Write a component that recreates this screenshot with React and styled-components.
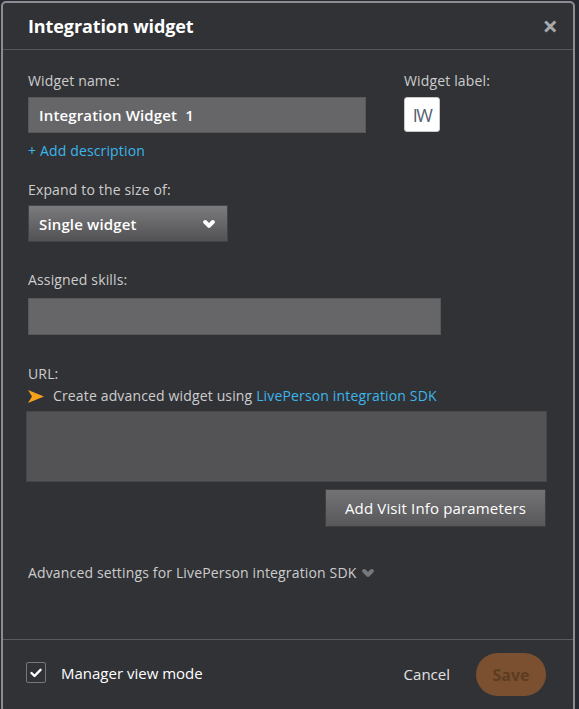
import React from 'react';
import styled, { createGlobalStyle } from 'styled-components';

const GlobalStyle = createGlobalStyle`
  html, body {
    margin: 0;
    padding: 0;
    background: #262832;
    font-family: "Open Sans", "Liberation Sans", sans-serif;
    overflow: hidden;
  }
`;

const Dialog = styled.div`
  margin: 1px 0 0 1px;
  width: 570px;
  height: 708px;
  border: 2px solid #8c8d91;
  border-radius: 5px;
  background: #313236;
  display: flex;
  flex-direction: column;
  color: #cfcfcf;
`;

const Header = styled.div`
  height: 46px;
  border-bottom: 1px solid #55565a;
  display: flex;
  align-items: center;
  justify-content: space-between;
  padding: 0 15px 0 25px;
`;

const Title = styled.h1`
  margin: 0;
  font-size: 18px;
  font-weight: 700;
  color: #fff;
  letter-spacing: -0.1px;
`;

const Close = styled.span`
  font-size: 27px;
  font-weight: 700;
  color: #a9a9ab;
  line-height: 1;
  margin-top: -2px;
`;

const Body = styled.div`
  height: 590px;
  box-sizing: border-box;
  padding: 22px 27px 0 25px;
  display: flex;
  flex-direction: column;
  border-bottom: 1px solid #5a5b5f;
  letter-spacing: 0.15px;
`;

const Row = styled.div`
  display: flex;
  gap: 38px;
`;

const Field = styled.div`
  display: flex;
  flex-direction: column;
  margin-top: ${({ $top }) => $top || 0}px;
`;

const Label = styled.div`
  font-size: 14px;
  line-height: 18px;
  color: #cdcdcd;
`;

const TextInput = styled.div`
  box-sizing: border-box;
  width: ${({ $w }) => $w}px;
  height: ${({ $h }) => $h || 36}px;
  margin-top: ${({ $gap }) => $gap || 7}px;
  background: #666668;
  border: 1px solid #58585a;
  display: flex;
  align-items: center;
  padding-left: 10px;
  font-size: 15px;
  font-weight: 600;
  color: #fff;
  white-space: pre;
`;

const LabelBox = styled.div`
  box-sizing: border-box;
  width: 36px;
  height: 35px;
  margin-top: 7px;
  background: #fff;
  border: 1px solid #c8c8c8;
  border-radius: 3px;
  display: flex;
  align-items: center;
  justify-content: center;
  font-size: 18px;
  color: #56606c;
  letter-spacing: -1.5px;
`;

const Link = styled.span`
  color: #3cb6ea;
`;

const AddDesc = styled.div`
  margin-top: 8px;
  font-size: 14px;
  line-height: 20px;
  color: #3cb6ea;
`;

const Select = styled.div`
  box-sizing: border-box;
  width: 200px;
  height: 37px;
  margin-top: 6px;
  background: linear-gradient(to bottom, #7b7b7d, #525254);
  border: 1px solid #444447;
  display: flex;
  align-items: center;
  justify-content: space-between;
  padding: 0 12px 0 10px;
  font-size: 15px;
  font-weight: 600;
  color: #fff;
`;

const Hint = styled.div`
  margin-top: 3px;
  display: flex;
  align-items: center;
  gap: 9px;
  font-size: 14px;
  line-height: 20px;
  color: #cdcdcd;
`;

const TextArea = styled.div`
  box-sizing: border-box;
  width: 521px;
  height: 71px;
  margin: 5px 0 0 -2px;
  background: #535355;
  border: 1px solid #47474a;
`;

const ButtonRow = styled.div`
  display: flex;
  justify-content: flex-end;
  margin-top: 7px;
`;

const GrayButton = styled.div`
  box-sizing: border-box;
  width: 221px;
  height: 38px;
  background: linear-gradient(to bottom, #737375, #58585a);
  border: 1px solid #3f3f42;
  display: flex;
  align-items: center;
  justify-content: center;
  font-size: 15px;
  color: #fff;
`;

const Advanced = styled.div`
  margin-top: 36px;
  display: flex;
  align-items: center;
  gap: 6px;
  font-size: 14px;
  line-height: 20px;
  color: #cdcdcd;
`;

const Footer = styled.div`
  flex: 1;
  display: flex;
  align-items: flex-start;
  padding: 13px 27px 0 23px;
`;

const Check = styled.label`
  display: flex;
  align-items: center;
  gap: 15px;
  margin-top: 9px;
  font-size: 15px;
  color: #fff;
`;

const Box = styled.span`
  box-sizing: border-box;
  width: 20px;
  height: 21px;
  border: 1px solid #76777b;
  border-radius: 2px;
  display: flex;
  align-items: center;
  justify-content: center;
`;

const Actions = styled.div`
  margin-left: auto;
  display: flex;
  align-items: center;
  gap: 26px;
`;

const Cancel = styled.span`
  font-size: 15px;
  color: #e2e2e2;
  margin-top: -2px;
`;

const Save = styled.div`
  width: 70px;
  height: 43px;
  border-radius: 22px;
  background: #7a5030;
  display: flex;
  align-items: center;
  justify-content: center;
  font-size: 16px;
  font-weight: 700;
  color: #5d3c22;
`;

function Chevron({ color }) {
  return (
    <svg width="12" height="10" viewBox="0 0 12 10">
      <path d="M2.2 3 L6 6.8 L9.8 3" fill="none" stroke={color} strokeWidth="4" strokeLinecap="round" strokeLinejoin="round" />
    </svg>
  );
}

function Arrow() {
  return (
    <svg width="16" height="13" viewBox="0 0 16 13">
      <polygon points="0,0 16,6.5 0,13 4,6.5" fill="#f5a11c" />
    </svg>
  );
}

export default function App() {
  return (
    <>
      <GlobalStyle />
      <Dialog>
        <Header>
          <Title>Integration widget</Title>
          <Close>×</Close>
        </Header>
        <Body>
          <Row>
            <Field>
              <Label>Widget name:</Label>
              <TextInput $w={338}>Integration Widget  1</TextInput>
            </Field>
            <Field>
              <Label>Widget label:</Label>
              <LabelBox>IW</LabelBox>
            </Field>
          </Row>
          <AddDesc>+ Add description</AddDesc>

          <Field $top={20}>
            <Label>Expand to the size of:</Label>
            <Select>
              Single widget
              <Chevron color="#fff" />
            </Select>
          </Field>

          <Field $top={29}>
            <Label>Assigned skills:</Label>
            <TextInput $w={413} $h={37} $gap={9} />
          </Field>

          <Field $top={30}>
            <Label>URL:</Label>
            <Hint>
              <Arrow />
              <span>
                Create advanced widget using <Link>LivePerson integration SDK</Link>
              </span>
            </Hint>
            <TextArea />
          </Field>
          <ButtonRow>
            <GrayButton>Add Visit Info parameters</GrayButton>
          </ButtonRow>

          <Advanced>
            Advanced settings for LivePerson integration SDK
            <Chevron color="#77787b" />
          </Advanced>
        </Body>
        <Footer>
          <Check>
            <Box>
              <svg width="12" height="10" viewBox="0 0 12 10">
                <path d="M1.5 5 L4.5 8 L10.5 1.8" fill="none" stroke="#fff" strokeWidth="2.4" strokeLinecap="round" strokeLinejoin="round" />
              </svg>
            </Box>
            Manager view mode
          </Check>
          <Actions>
            <Cancel>Cancel</Cancel>
            <Save>Save</Save>
          </Actions>
        </Footer>
      </Dialog>
    </>
  );
}
